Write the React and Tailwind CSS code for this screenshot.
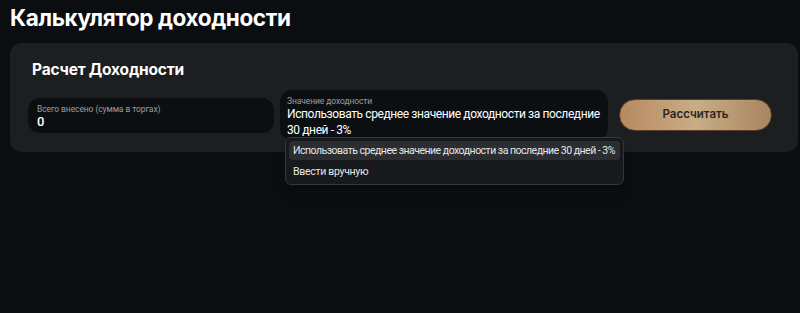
export default function App() {
    const font = { fontFamily: 'Inter, "Noto Sans", sans-serif' };
    const body = { fontFamily: 'Roboto, "Noto Sans", sans-serif' };
    return (
        <div className="w-[800px] h-[313px] bg-[#0b0e10] overflow-hidden text-white" style={font}>
            <h1 className="pl-[10px] pt-[3px] text-[22.5px] leading-[30px] font-bold tracking-[-0.4px]">Калькулятор доходности</h1>
            <div className="ml-[10px] mr-[2px] mt-[10px] h-[109px] rounded-[12px] bg-[#1c1e20] pl-[18px] pr-[26px] pt-[15px]">
                <h2 className="pl-[4px] text-[15.5px] leading-[24px] font-bold tracking-[-0.2px]">Расчет Доходности</h2>
                <div className="flex items-center mt-[8px]" style={body}>
                    <div className="w-[246px] h-[35px] rounded-[12px] bg-[#0c0f12] px-[9px] pt-[6px]">
                        <div className="text-[8.5px] leading-[10px] text-[#9a9da1] tracking-[-0.1px]">Всего внесено (сумма в торгах)</div>
                        <div className="text-[13px] leading-[16px] font-medium">0</div>
                    </div>
                    <div className="relative ml-[6px] w-[328px] h-[50px] rounded-[12px] bg-[#0c0f12] px-[7px] pt-[6px]">
                        <div className="text-[8.5px] leading-[10px] text-[#9a9da1] tracking-[-0.1px]">Значение доходности</div>
                        <div className="text-[12px] leading-[16px] tracking-[-0.4px]">Использовать среднее значение доходности за последние 30 дней - 3%</div>
                        <div className="absolute left-[5px] top-[47px] w-[339px] h-[48px] rounded-[6px] border border-[#34373b] bg-[#17191c] p-[3px] shadow-lg">
                            <div className="h-[19px] rounded-[4px] bg-[#2b2d31] px-[4px] text-[10.5px] leading-[19px] text-[#e6e6e6] tracking-[-0.5px] whitespace-nowrap">Использовать среднее значение доходности за последние 30 дней - 3%</div>
                            <div className="mt-[2px] h-[19px] px-[4px] text-[10.5px] leading-[19px] text-[#e6e6e6] tracking-[-0.3px]">Ввести вручную</div>
                        </div>
                    </div>
                    <button className="ml-[11px] w-[153px] h-[32px] rounded-full border border-[#5a3e25] bg-gradient-to-r from-[#b7895f] via-[#c8ad86] to-[#a88660] text-[11.5px] font-semibold text-[#2a2420]" style={font}>Рассчитать</button>
                </div>
            </div>
        </div>
    );
}
